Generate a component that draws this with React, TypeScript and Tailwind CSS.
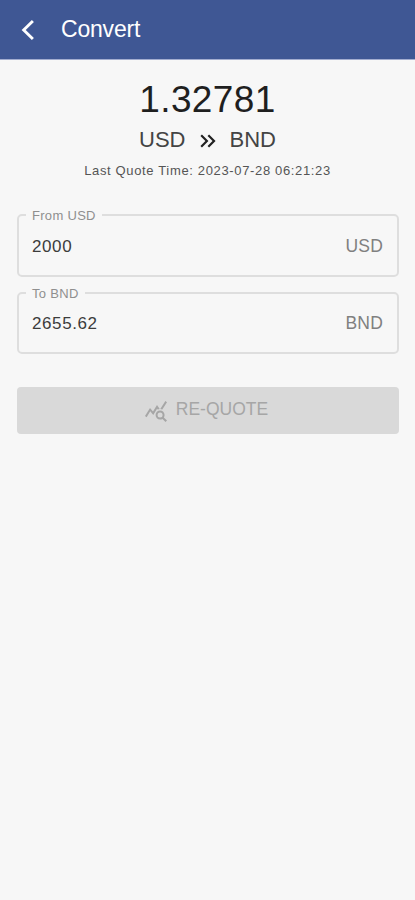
import React from 'react'
import { MdKeyboardDoubleArrowRight, MdQueryStats } from 'react-icons/md'

type FieldProps = {
  label: string
  value: string
  currency: string
  className?: string
}

const BackIcon = () => (
  <svg viewBox="0 0 24 24" fill="none" className="size-6">
    <path d="M16.9 3 7.7 12l9.2 9" stroke="currentColor" strokeWidth="2.9" />
  </svg>
)

const AmountField = ({ label, value, currency, className }: FieldProps) => {
  return (
    <fieldset
      className={`w-full rounded-[5px] border-2 border-[#dedede] pl-[7px] pr-[14px] ${className}`}
    >
      <legend className="h-[14px] px-[6px] text-[13px] leading-[16px] tracking-[0.3px] text-[#8f8f8f]">
        {label}
      </legend>
      <div className="flex h-full items-center justify-between pb-[4px] pl-[6px]">
        <span className="text-[17px] leading-6 tracking-[0.6px] text-[#3c3c3c]">
          {value}
        </span>
        <span className="pb-[2px] text-[17.5px] leading-6 tracking-[0.2px] text-[#808080]">
          {currency}
        </span>
      </div>
    </fieldset>
  )
}

const App = () => {
  return (
    <div className="min-h-screen w-full bg-[#f7f7f7] font-['Liberation_Sans',Arial,sans-serif]">
      <header className="flex h-[60px] items-center border-b border-[#a3add0] bg-[#3f5794] pl-[16px] text-white">
        <BackIcon />
        <h1 className="ml-[21px] pb-[2px] text-[23px] leading-7 tracking-[-0.2px]">
          Convert
        </h1>
      </header>

      <main className="pl-[17px] pr-[16px]">
        <div className="flex flex-col items-center pt-5 pr-px text-[#1f1f1f]">
          <p className="text-[37px] leading-[40px] tracking-[0.4px]">1.32781</p>
          <div className="flex h-10 items-center text-[22px] text-[#444]">
            <span className="pb-[2px]">USD</span>
            <MdKeyboardDoubleArrowRight className="mx-[9px] mt-[2px] size-[26px] text-[#222]" />
            <span className="pb-[2px]">BND</span>
          </div>
          <p className="pt-px text-[13px] leading-5 tracking-[0.65px] text-[#555]">
            Last Quote Time: 2023-07-28 06:21:23
          </p>
        </div>

        <AmountField
          label="From USD"
          value="2000"
          currency="USD"
          className="mt-[27px] h-[69px]"
        />
        <AmountField
          label="To BND"
          value="2655.62"
          currency="BND"
          className="mt-[9px] h-[68px]"
        />

        <button
          type="button"
          disabled
          className="mt-[33px] flex h-[47px] w-full items-center justify-center rounded-[4px] bg-[#d9d9d9] pr-[4px] text-[17.5px] text-[#a6a6a6]"
        >
          <MdQueryStats className="mr-2 size-6" />
          <span className="pb-[2px]">RE-QUOTE</span>
        </button>
      </main>
    </div>
  )
}

export default App
